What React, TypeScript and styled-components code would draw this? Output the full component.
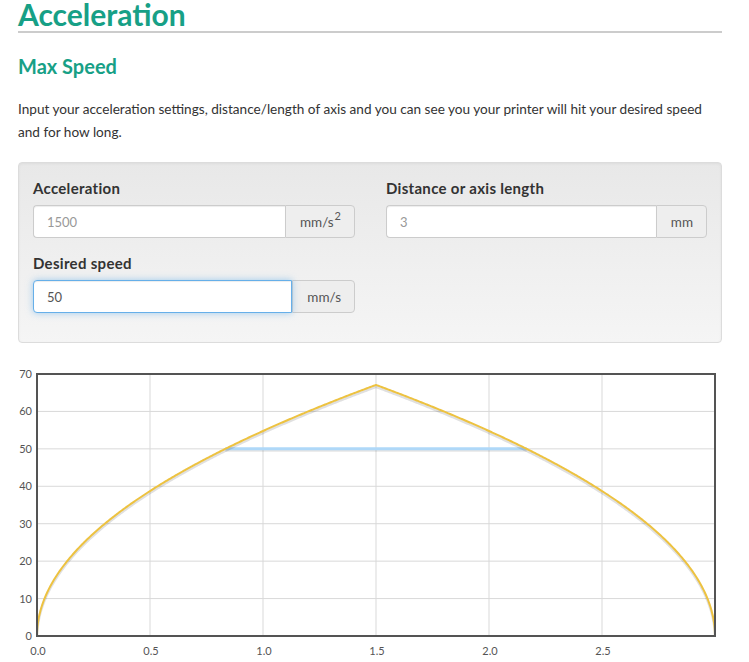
import React from 'react';
import styled, { createGlobalStyle } from 'styled-components';

const GlobalStyle = createGlobalStyle`
  html, body {
    margin: 0;
    padding: 0;
    background: #fff;
  }
  body {
    font-family: Lato, "Open Sans", sans-serif;
    color: #333;
  }
`;

const Page = styled.div`
  width: 704px;
  margin-left: 18px;
`;

const Title = styled.h1`
  margin: 0;
  padding-bottom: 3px;
  font-size: 30px;
  line-height: 28px;
  font-weight: 700;
  color: #17a086;
  border-bottom: 2px solid #cccccc;
`;

const SubTitle = styled.h2`
  margin: 19px 0 0;
  font-size: 20px;
  line-height: 28px;
  font-weight: 700;
  color: #17a086;
`;

const Intro = styled.p`
  margin: 18px 0 0;
  font-size: 13.6px;
  line-height: 23px;
  color: #333;
`;

const Well = styled.div`
  margin-top: 18px;
  padding: 15px 14px 14px;
  border: 1px solid #dcdcdc;
  border-radius: 4px;
  background: linear-gradient(to bottom, #e8e8e8 0%, #f5f5f5 100%);
  box-shadow: inset 0 1px 3px rgba(0, 0, 0, 0.05);
`;

const FormGrid = styled.div`
  display: grid;
  grid-template-columns: 322px 321px;
  column-gap: 31px;
`;

const Field = styled.div`
  margin-bottom: 15px;
`;

const Label = styled.label`
  display: block;
  margin-bottom: 7px;
  font-size: 15px;
  line-height: 20px;
  font-weight: 700;
  letter-spacing: 0.3px;
  color: #333;
`;

const Group = styled.div`
  display: flex;
  height: 33px;
`;

const Input = styled.input<{ $focused?: boolean }>`
  flex: 1;
  min-width: 0;
  box-sizing: border-box;
  height: 33px;
  margin: 0;
  padding: 0 13px;
  font-family: inherit;
  font-size: 13px;
  color: #555;
  background: #fff;
  border: 1px solid ${p => (p.$focused ? '#66afe9' : '#ccc')};
  border-right: ${p => (p.$focused ? '1px solid #66afe9' : 'none')};
  border-radius: 4px 0 0 4px;
  outline: none;
  box-shadow: ${p =>
    p.$focused
      ? 'inset 0 1px 1px rgba(0,0,0,.075), 0 0 7px rgba(102,175,233,.6)'
      : 'inset 0 1px 1px rgba(0,0,0,.075)'};
  position: relative;
  z-index: ${p => (p.$focused ? 1 : 0)};

  &::placeholder {
    color: #999;
  }
`;

const Addon = styled.span`
  display: flex;
  align-items: center;
  box-sizing: border-box;
  padding: 0 13px 0 14px;
  font-size: 13.5px;
  color: #555;
  background: #eee;
  border: 1px solid #ccc;
  border-radius: 0 4px 4px 0;

  sup {
    font-size: 11px;
    line-height: 0;
    position: relative;
    top: -6px;
    vertical-align: baseline;
    margin-left: 1px;
  }
`;

const ChartBox = styled.div`
  margin-top: 20px;
  height: 300px;
`;

const AxisText = styled.text`
  font-family: Lato, "Open Sans", sans-serif;
  font-size: 11px;
  fill: #545454;
`;

// plot geometry (inside the svg)
const PL = 19;
const PR = 697;
const PT = 11;
const PB = 273;
const X_MAX = 3;
const Y_MAX = 70;

const sx = (v: number) => PL + (v / X_MAX) * (PR - PL);
const sy = (v: number) => PB - (v / Y_MAX) * (PB - PT);

const accel = 1500;
const dist = 3;
const desired = 50;

function speedAt(s: number) {
  const half = dist / 2;
  const d = s <= half ? s : dist - s;
  return Math.sqrt(2 * accel * Math.max(d, 0));
}

function buildCurve() {
  const pts: number[] = [];
  const n = 600;
  for (let i = 0; i <= n; i++) {
    pts.push((i / n) * dist);
  }
  // denser sampling near both ends, the curve is steep there
  [0.0005, 0.001, 0.002, 0.004, 0.008].forEach(e => {
    pts.push(e);
    pts.push(dist - e);
  });
  pts.push(dist / 2);
  pts.sort((a, b) => a - b);
  return pts.map((s, i) => `${i ? 'L' : 'M'}${sx(s).toFixed(2)},${sy(speedAt(s)).toFixed(2)}`).join(' ');
}

const curve = buildCurve();
const sReach = (desired * desired) / (2 * accel);
const flatLine = `M${sx(sReach)},${sy(desired)} L${sx(dist - sReach)},${sy(desired)}`;

const xTicks = [0, 0.5, 1, 1.5, 2, 2.5];
const yTicks = [0, 10, 20, 30, 40, 50, 60, 70];

function SpeedChart() {
  return (
    <ChartBox>
      <svg width="704" height="300" viewBox="0 0 704 300">
        <defs>
          <clipPath id="plot">
            <rect x={PL} y={PT - 2} width={PR - PL} height={PB - PT + 2} />
          </clipPath>
        </defs>
        {xTicks.slice(1).map(t => (
          <line key={`gx${t}`} x1={sx(t)} x2={sx(t)} y1={PT} y2={PB} stroke="#d9d9d9" strokeWidth="1" />
        ))}
        {yTicks.slice(1, -1).map(t => (
          <line key={`gy${t}`} x1={PL} x2={PR} y1={sy(t)} y2={sy(t)} stroke="#d9d9d9" strokeWidth="1" />
        ))}
        <g clipPath="url(#plot)" fill="none" strokeLinejoin="round">
          <path d={flatLine} transform="translate(0,2)" stroke="rgba(0,0,0,0.1)" strokeWidth="2" />
          <path d={flatLine} stroke="#afd8f8" strokeWidth="3" />
          <path d={curve} transform="translate(0,2)" stroke="rgba(0,0,0,0.12)" strokeWidth="2.5" />
          <path d={curve} stroke="#edc240" strokeWidth="2" />
        </g>
        <rect x={PL} y={PT} width={PR - PL} height={PB - PT} fill="none" stroke="#545454" strokeWidth="2" />
        {yTicks.map(t => (
          <AxisText key={`ly${t}`} x={PL - 5} y={sy(t) + 4} textAnchor="end">
            {t}
          </AxisText>
        ))}
        {xTicks.map(t => (
          <AxisText key={`lx${t}`} x={sx(t) + 1} y={PB + 19} textAnchor="middle">
            {t.toFixed(1)}
          </AxisText>
        ))}
      </svg>
    </ChartBox>
  );
}

export default function App() {
  return (
    <Page>
      <GlobalStyle />
      <Title>Acceleration</Title>
      <SubTitle>Max Speed</SubTitle>
      <Intro>
        Input your acceleration settings, distance/length of axis and you can see you your printer will hit your desired speed
        and for how long.
      </Intro>
      <Well>
        <FormGrid>
          <Field>
            <Label>Acceleration</Label>
            <Group>
              <Input placeholder="1500" />
              <Addon>
                mm/s<sup>2</sup>
              </Addon>
            </Group>
          </Field>
          <Field>
            <Label>Distance or axis length</Label>
            <Group>
              <Input placeholder="3" />
              <Addon>mm</Addon>
            </Group>
          </Field>
          <Field>
            <Label>Desired speed</Label>
            <Group>
              <Input $focused defaultValue="50" autoFocus />
              <Addon>mm/s</Addon>
            </Group>
          </Field>
        </FormGrid>
      </Well>
      <SpeedChart />
    </Page>
  );
}
